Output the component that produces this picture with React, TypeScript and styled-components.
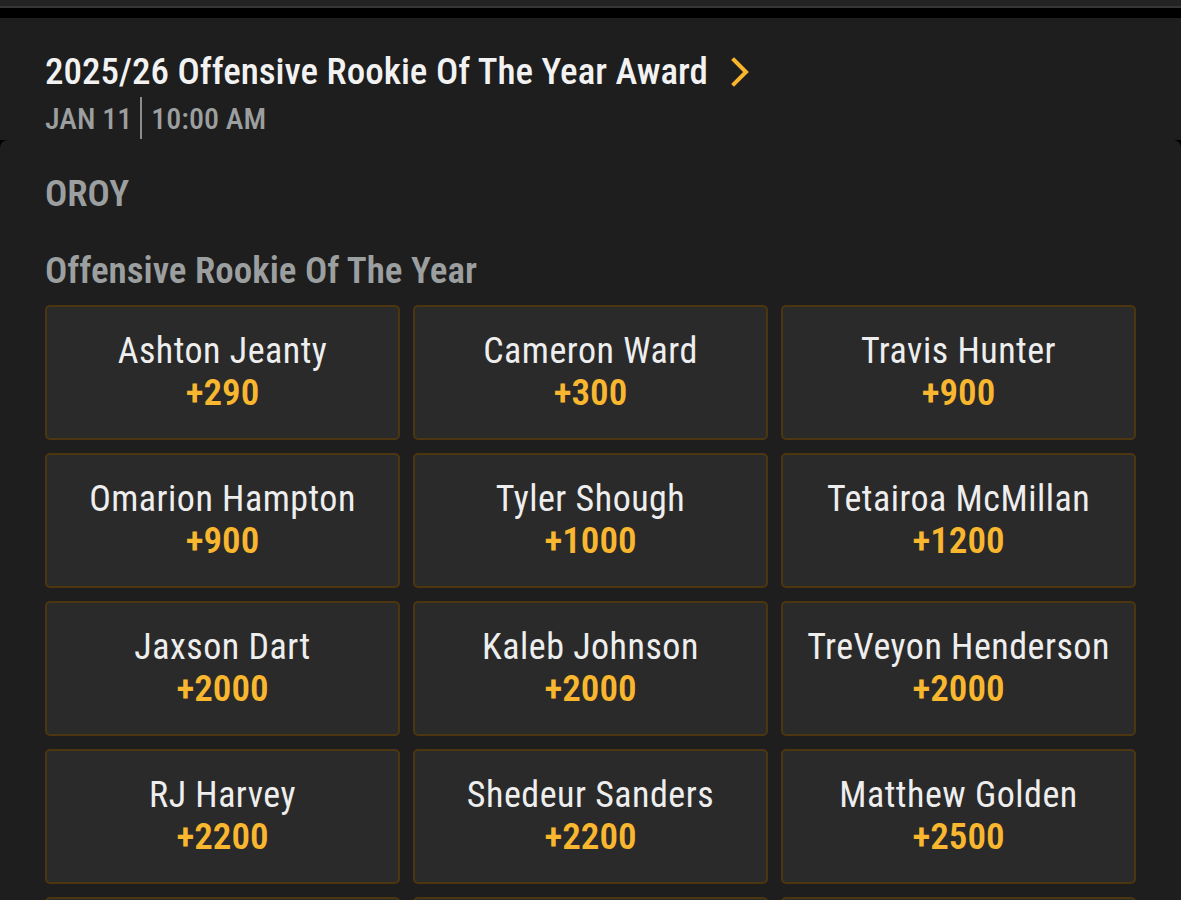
import styled, { createGlobalStyle } from "styled-components";

const GlobalStyle = createGlobalStyle`
  html, body {
    margin: 0;
    padding: 0;
    background: #000;
  }

  body {
    font-family: "Roboto Condensed", "Roboto", "DejaVu Sans Condensed", sans-serif;
    -webkit-font-smoothing: antialiased;
  }
`;

const Page = styled.div`
  width: 1181px;
  height: 900px;
  overflow: hidden;
  background: #000;
`;

const StatusStrip = styled.div`
  height: 6px;
  background: #232323;
  border-bottom: 2px solid #363636;
  margin-bottom: 10px;
`;

const EventHeader = styled.header`
  background: #1e1e1e;
  padding: 32px 45px 0;
  height: 122px;
  box-sizing: border-box;
`;

const TitleRow = styled.div`
  display: flex;
  align-items: center;
  gap: 22px;
  height: 44px;
`;

const Title = styled.h1`
  margin: 0;
  font-size: 37px;
  line-height: 44px;
  font-weight: 500;
  color: #f2f2f2;
`;

const DateRow = styled.div`
  display: flex;
  align-items: center;
  height: 42px;
  margin-top: 3px;
  font-size: 30px;
  font-weight: 500;
  color: #9c9f9f;
`;

const Divider = styled.span`
  width: 2px;
  height: 42px;
  background: #8a8d8d;
  margin: 0 9px 0 8px;
`;

const Panel = styled.section`
  background: #1e1e1e;
  border-radius: 8px 8px 0 0;
  padding: 34px 45px 0;
`;

const Label = styled.div<{ gap?: number }>`
  font-size: 37px;
  line-height: 40px;
  font-weight: 600;
  color: #9c9f9f;
  margin-bottom: ${({ gap }) => gap ?? 0}px;
`;

const OddsGrid = styled.div`
  display: grid;
  grid-template-columns: repeat(3, 1fr);
  gap: 13px;
`;

const OddsButton = styled.button`
  height: 135px;
  display: flex;
  flex-direction: column;
  align-items: center;
  justify-content: center;
  background: #2a2a2a;
  border: 2px solid #4c3610;
  border-radius: 5px;
  padding: 0 0 2px;
  font-family: inherit;
  cursor: pointer;
`;

const Player = styled.span`
  font-size: 36px;
  line-height: 42px;
  font-weight: 400;
  letter-spacing: 0.5px;
  color: #eeeeee;
`;

const Price = styled.span`
  font-size: 37px;
  line-height: 42px;
  font-weight: 600;
  color: #f9b730;
`;

const Chevron = () => (
  <svg width="20" height="30" viewBox="0 0 20 30" fill="none">
    <path
      d="M4 3 L16 15 L4 27"
      stroke="#f9b52c"
      strokeWidth="4"
      strokeLinecap="square"
    />
  </svg>
);

const selections = [
  { name: "Ashton Jeanty", price: "+290" },
  { name: "Cameron Ward", price: "+300" },
  { name: "Travis Hunter", price: "+900" },
  { name: "Omarion Hampton", price: "+900" },
  { name: "Tyler Shough", price: "+1000" },
  { name: "Tetairoa McMillan", price: "+1200" },
  { name: "Jaxson Dart", price: "+2000" },
  { name: "Kaleb Johnson", price: "+2000" },
  { name: "TreVeyon Henderson", price: "+2000" },
  { name: "RJ Harvey", price: "+2200" },
  { name: "Shedeur Sanders", price: "+2200" },
  { name: "Matthew Golden", price: "+2500" },
  { name: "Emeka Egbuka", price: "+2500" },
  { name: "Tyler Warren", price: "+2800" },
  { name: "Colston Loveland", price: "+3000" },
];

export default function App() {
  return (
    <Page>
      <GlobalStyle />
      <StatusStrip />
      <EventHeader>
        <TitleRow>
          <Title>2025/26 Offensive Rookie Of The Year Award</Title>
          <Chevron />
        </TitleRow>
        <DateRow>
          JAN 11
          <Divider />
          10:00 AM
        </DateRow>
      </EventHeader>
      <Panel>
        <Label gap={37}>OROY</Label>
        <Label gap={14}>Offensive Rookie Of The Year</Label>
        <OddsGrid>
          {selections.map((s) => (
            <OddsButton key={s.name}>
              <Player>{s.name}</Player>
              <Price>{s.price}</Price>
            </OddsButton>
          ))}
        </OddsGrid>
      </Panel>
    </Page>
  );
}
